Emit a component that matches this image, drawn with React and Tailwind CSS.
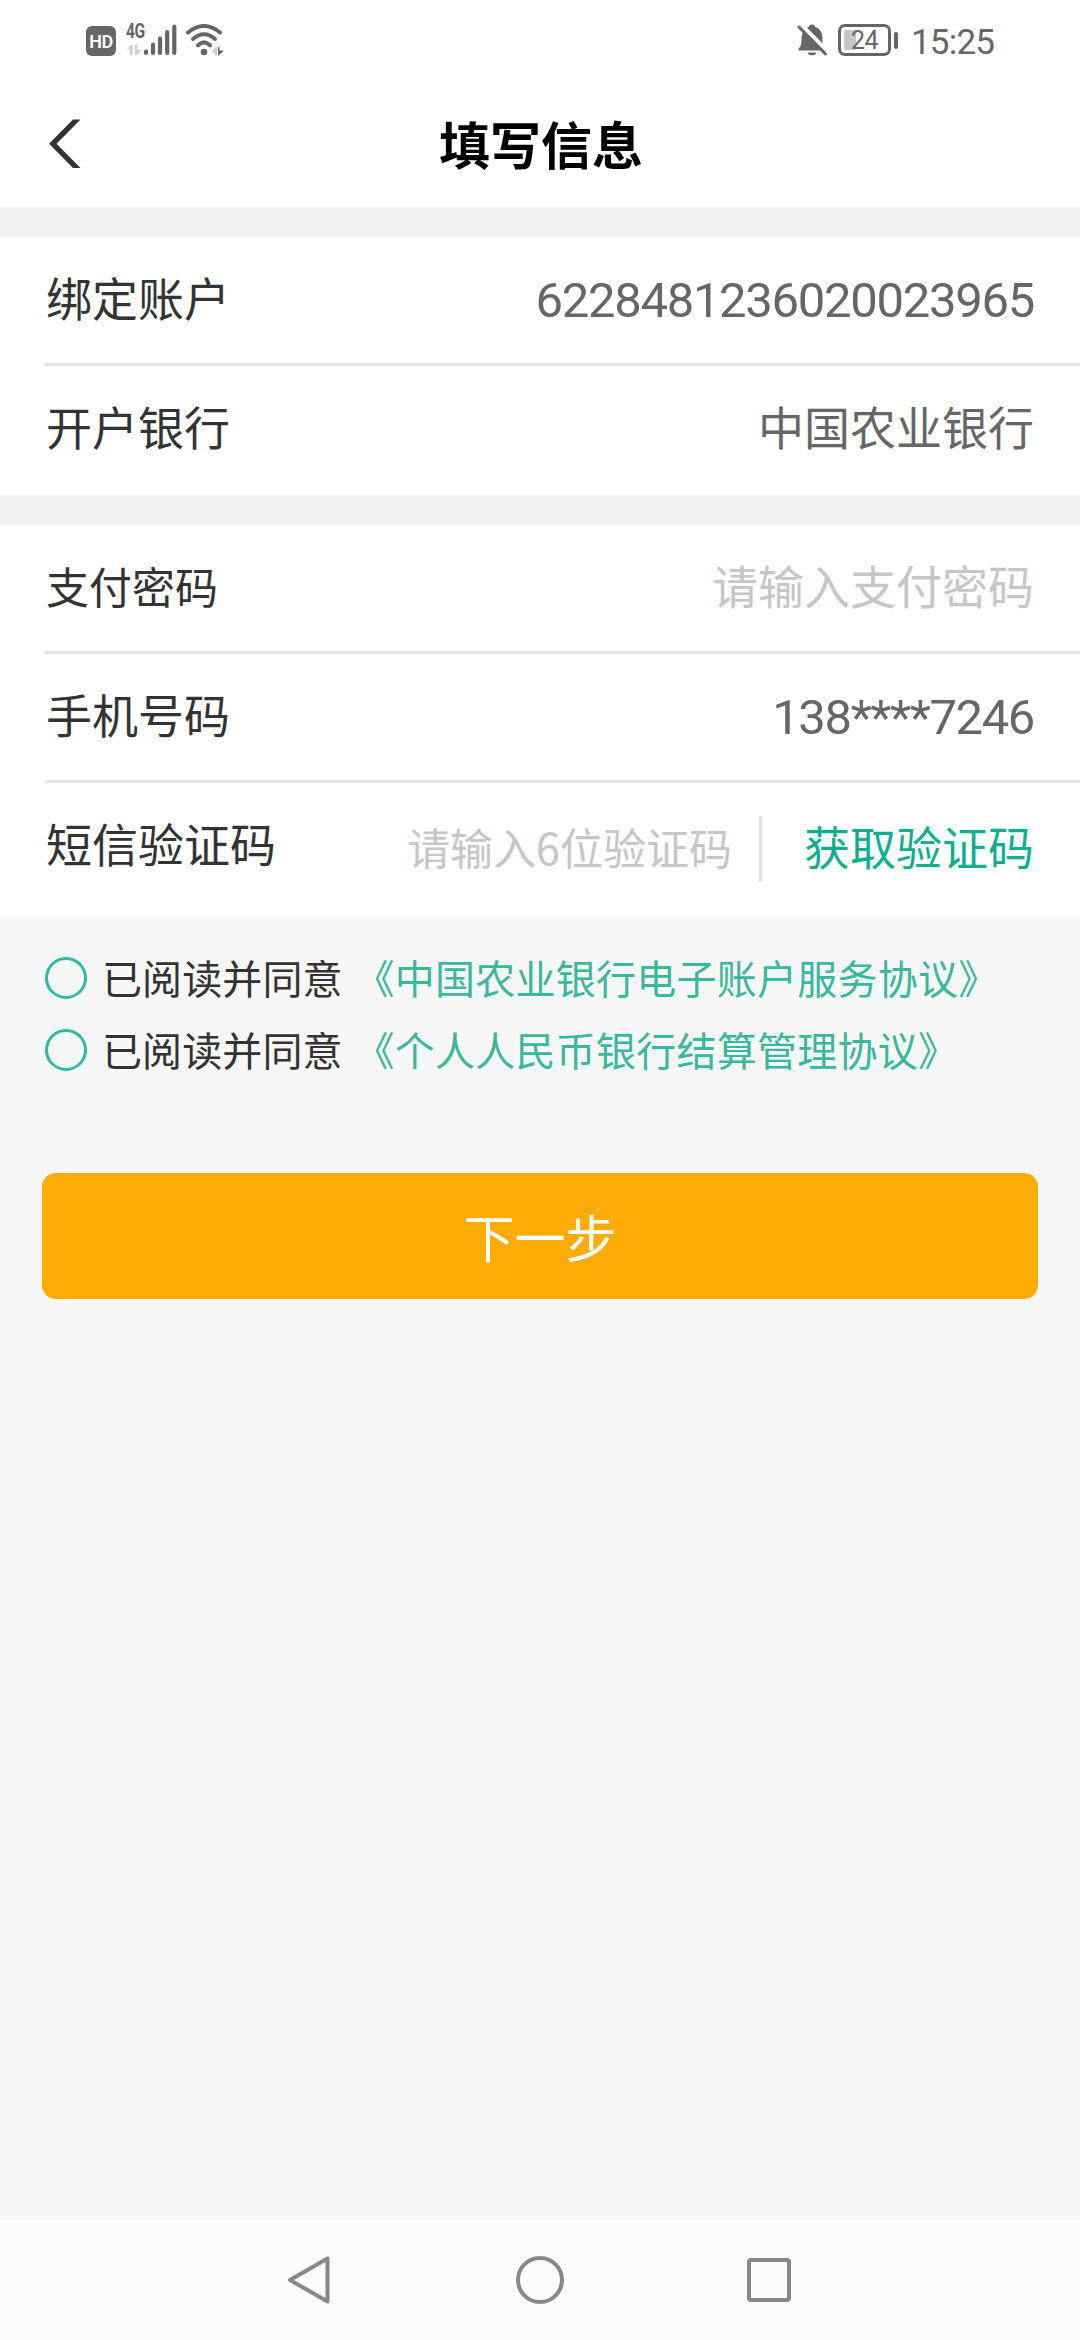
import React, { useState } from "react";

const AGREEMENTS = [
  "《中国农业银行电子账户服务协议》",
  "《个人人民币银行结算管理协议》",
];

function StatusBar() {
  return (
    <div className="h-[81px] pl-[86px] pr-[86px] flex items-start justify-between text-[#666666]">
      <div className="flex items-start pt-6">
        <div className="mt-[2px] w-[30px] h-[30px] rounded-[6px] bg-[#666666] text-white text-[18px] leading-[31px] font-semibold text-center tracking-[-0.5px] font-['Roboto',sans-serif]">
          HD
        </div>

        <div className="ml-[10px] w-[18px] flex flex-col">
          <span className="h-[15px] text-[20px] leading-[15px] font-bold tracking-[-0.5px] origin-left scale-x-[0.78] font-['Roboto',sans-serif]">
            4G
          </span>
          <svg width="16" height="12" viewBox="0 0 16 12" className="mt-[5px]" fill="#d0d0d0">
            <path d="M0 6L5 1h1.600v10H4V5H0z" />
            <path d="M9 1h2.400v5H16l-5 5H9z" />
          </svg>
        </div>

        <svg width="34" height="32" viewBox="0 0 34 32" className="-ml-[1px]" stroke="#666666" strokeWidth="4.200" strokeLinecap="round">
          <path d="M3 27.500v1.500M10 20.500v8.500M17 14.500v14.500M24.200 8v21M31.300 2.500v26.500" />
        </svg>

        <svg width="40" height="34" viewBox="0 0 40 34" className="ml-[8px]" fill="none">
          <g stroke="#666666" strokeWidth="4" strokeLinecap="round">
            <path d="M3 8.500Q19 -4.500 35 8.500" />
            <path d="M8 15Q19 5.500 30 15" />
            <path d="M13 21.300Q19 15.500 25 21.300" />
          </g>
          <circle cx="19" cy="28" r="3.300" fill="#666666" />
          <path d="M26 28.500L31 23h1v8.500h-2v-3z" fill="#cccccc" />
          <path d="M33 23h1.500v3.500H39L33.500 31.500H33z" fill="#666666" />
        </svg>
      </div>

      <div className="flex items-start pt-6">
        <svg width="32" height="34" viewBox="0 0 32 34" className="-ml-[1px]" fill="#666666">
          <path d="M2.500 24.500C5 22.500 5.500 20 5.500 15.500C5.500 8 9 4 12.800 3C13.500 -0.200 18.500 -0.200 19.200 3C24 4.200 26.500 8.500 26.500 15.500C26.500 20 27 22.500 29.500 24.500V26.500H2.500z" />
          <path d="M11.500 28.500h9c-1 3.800-8 3.800-9 0z" />
          <path d="M4.500 0L33 28.500" stroke="#ffffff" strokeWidth="4" />
          <path d="M3 3L29.500 30" stroke="#666666" strokeWidth="3" strokeLinecap="round" />
        </svg>

        <div className="ml-[10px] w-[53px] h-[32px] rounded-[7px] border-[3px] border-[#666666] p-[3px] flex">
          <div className="w-[12px] h-full rounded-[2px] bg-[#c8c8c8]" />
          <span className="-ml-[5px] w-[28px] text-[25px] leading-[21px] tracking-[-0.5px] font-['Roboto',sans-serif]">
            24
          </span>
        </div>
        <div className="ml-[3px] mt-[8px] w-[4px] h-[17px] rounded-sm bg-[#666666]" />

        <span className="ml-[13px] w-[83px] whitespace-nowrap text-[35px] leading-[38px] tracking-[-0.8px] font-['Roboto',sans-serif]">
          15:25
        </span>
      </div>
    </div>
  );
}

function Header() {
  return (
    <div className="h-[126px] grid grid-cols-[1fr_auto_1fr] items-start">
      <button className="ml-[48px] mt-[38px] w-[34px]">
        <svg width="34" height="50" viewBox="0 0 34 50" fill="#333333">
          <path d="M25 .5h7.500L8.500 24.800L32.500 49H25L1 24.800z" />
        </svg>
      </button>
      <h1 className="mt-[28px] pl-[2px] text-[51px] leading-[68px] font-bold text-black">
        填写信息
      </h1>
    </div>
  );
}

function Row({ label, labelClass = "text-[46px] mt-[25px]", last, height, children }) {
  return (
    <div className={height}>
      <div
        className={`ml-[45px] pr-[46px] h-full flex justify-between ${
          last ? "" : "border-b-[3px] border-[#e5e5e5]"
        }`}
      >
        <span className={`ml-[1px] leading-[68px] text-[#333333] ${labelClass}`}>
          {label}
        </span>
        {children}
      </div>
    </div>
  );
}

function Agreement({ name, checked, onToggle }) {
  return (
    <div className="h-[72px] flex items-start text-[40px] leading-[58px]">
      <button
        onClick={onToggle}
        className={`mt-[6px] w-[42px] h-[42px] rounded-full border-[3px] border-[#2fbb9f] ${
          checked ? "bg-[#2fbb9f]" : ""
        }`}
      />
      <span className="ml-[15px] -mt-[3px] text-[#333333] tracking-[0.1px]">已阅读并同意</span>
      <a className="ml-[12px] -mt-[3px] text-[#3bb79b] tracking-[0.25px]">{name}</a>
    </div>
  );
}

function NavBar() {
  return (
    <div className="h-[120px] bg-[#fcfcfc] flex items-start pt-9 pl-[286px]">
      <svg width="48" height="48" viewBox="0 0 48 48" fill="none" stroke="#888888" strokeWidth="4" strokeLinejoin="round">
        <path d="M4 24L41.500 2.500v43z" />
      </svg>
      <svg width="48" height="48" viewBox="0 0 48 48" className="ml-[182px]" fill="none" stroke="#888888" strokeWidth="4">
        <circle cx="24" cy="24" r="22" />
      </svg>
      <svg width="48" height="48" viewBox="0 0 48 48" className="ml-[181px]" fill="none" stroke="#888888" strokeWidth="4">
        <rect x="4" y="4" width="40" height="40" rx="2" />
      </svg>
    </div>
  );
}

export default function App() {
  const [checked, setChecked] = useState([false, false]);

  const toggle = (i) => {
    setChecked(checked.map((c, idx) => (idx === i ? !c : c)));
  };

  return (
    <div className="w-[1080px] h-[2340px] flex flex-col bg-[#f7f7f7] font-['Noto_Sans_CJK_SC',sans-serif] overflow-hidden">
      <div className="bg-white">
        <StatusBar />
        <Header />
      </div>

      {/* ACCOUNT */}
      <div className="bg-white border-t-[30px] border-[#f0f0f0]">
        <Row label="绑定账户" height="h-[129px]">
          <span className="mt-[30px] text-[49px] leading-[68px] tracking-[-1.3px] text-[#666666] font-['Roboto',sans-serif]">
            6228481236020023965
          </span>
        </Row>
        <Row label="开户银行" height="h-[129px]" last>
          <span className="mt-[25px] text-[46px] leading-[68px] text-[#666666]">
            中国农业银行
          </span>
        </Row>
      </div>

      {/* VERIFY */}
      <div className="bg-white border-t-[30px] border-[#f0f0f0]">
        <Row label="支付密码" labelClass="text-[43px] mt-[26px]" height="h-[129px]">
          <span className="mt-[25px] text-[46px] leading-[68px] text-[#c6c6c6]">
            请输入支付密码
          </span>
        </Row>
        <Row label="手机号码" height="h-[129px]">
          <span className="mt-[30px] text-[49px] leading-[68px] tracking-[-1.4px] text-[#666666] font-['Roboto',sans-serif]">
            138****7246
          </span>
        </Row>
        <Row label="短信验证码" height="h-[132px]" last>
          <div className="flex">
            <span className="mt-[29px] text-[43px] leading-[68px] text-[#c6c6c6]">
              请输入6位验证码
            </span>
            <div className="ml-[27px] mt-[33px] w-[3px] h-[66px] bg-[#e0e0e0]" />
            <button className="ml-[42px] mt-[28px] h-[68px] text-[46px] leading-[68px] text-[#0fae8f]">
              获取验证码
            </button>
          </div>
        </Row>
      </div>

      {/* AGREEMENTS */}
      <div className="pl-[45px] pt-9">
        {AGREEMENTS.map((name, i) => (
          <Agreement
            key={name}
            name={name}
            checked={checked[i]}
            onToggle={() => toggle(i)}
          />
        ))}
      </div>

      <button className="mx-[42px] mt-[78px] h-[126px] shrink-0 rounded-[14px] bg-[#fdab05] text-white text-[51px] leading-[68px]">
        下一步
      </button>

      <div className="mt-auto">
        <NavBar />
      </div>
    </div>
  );
}
